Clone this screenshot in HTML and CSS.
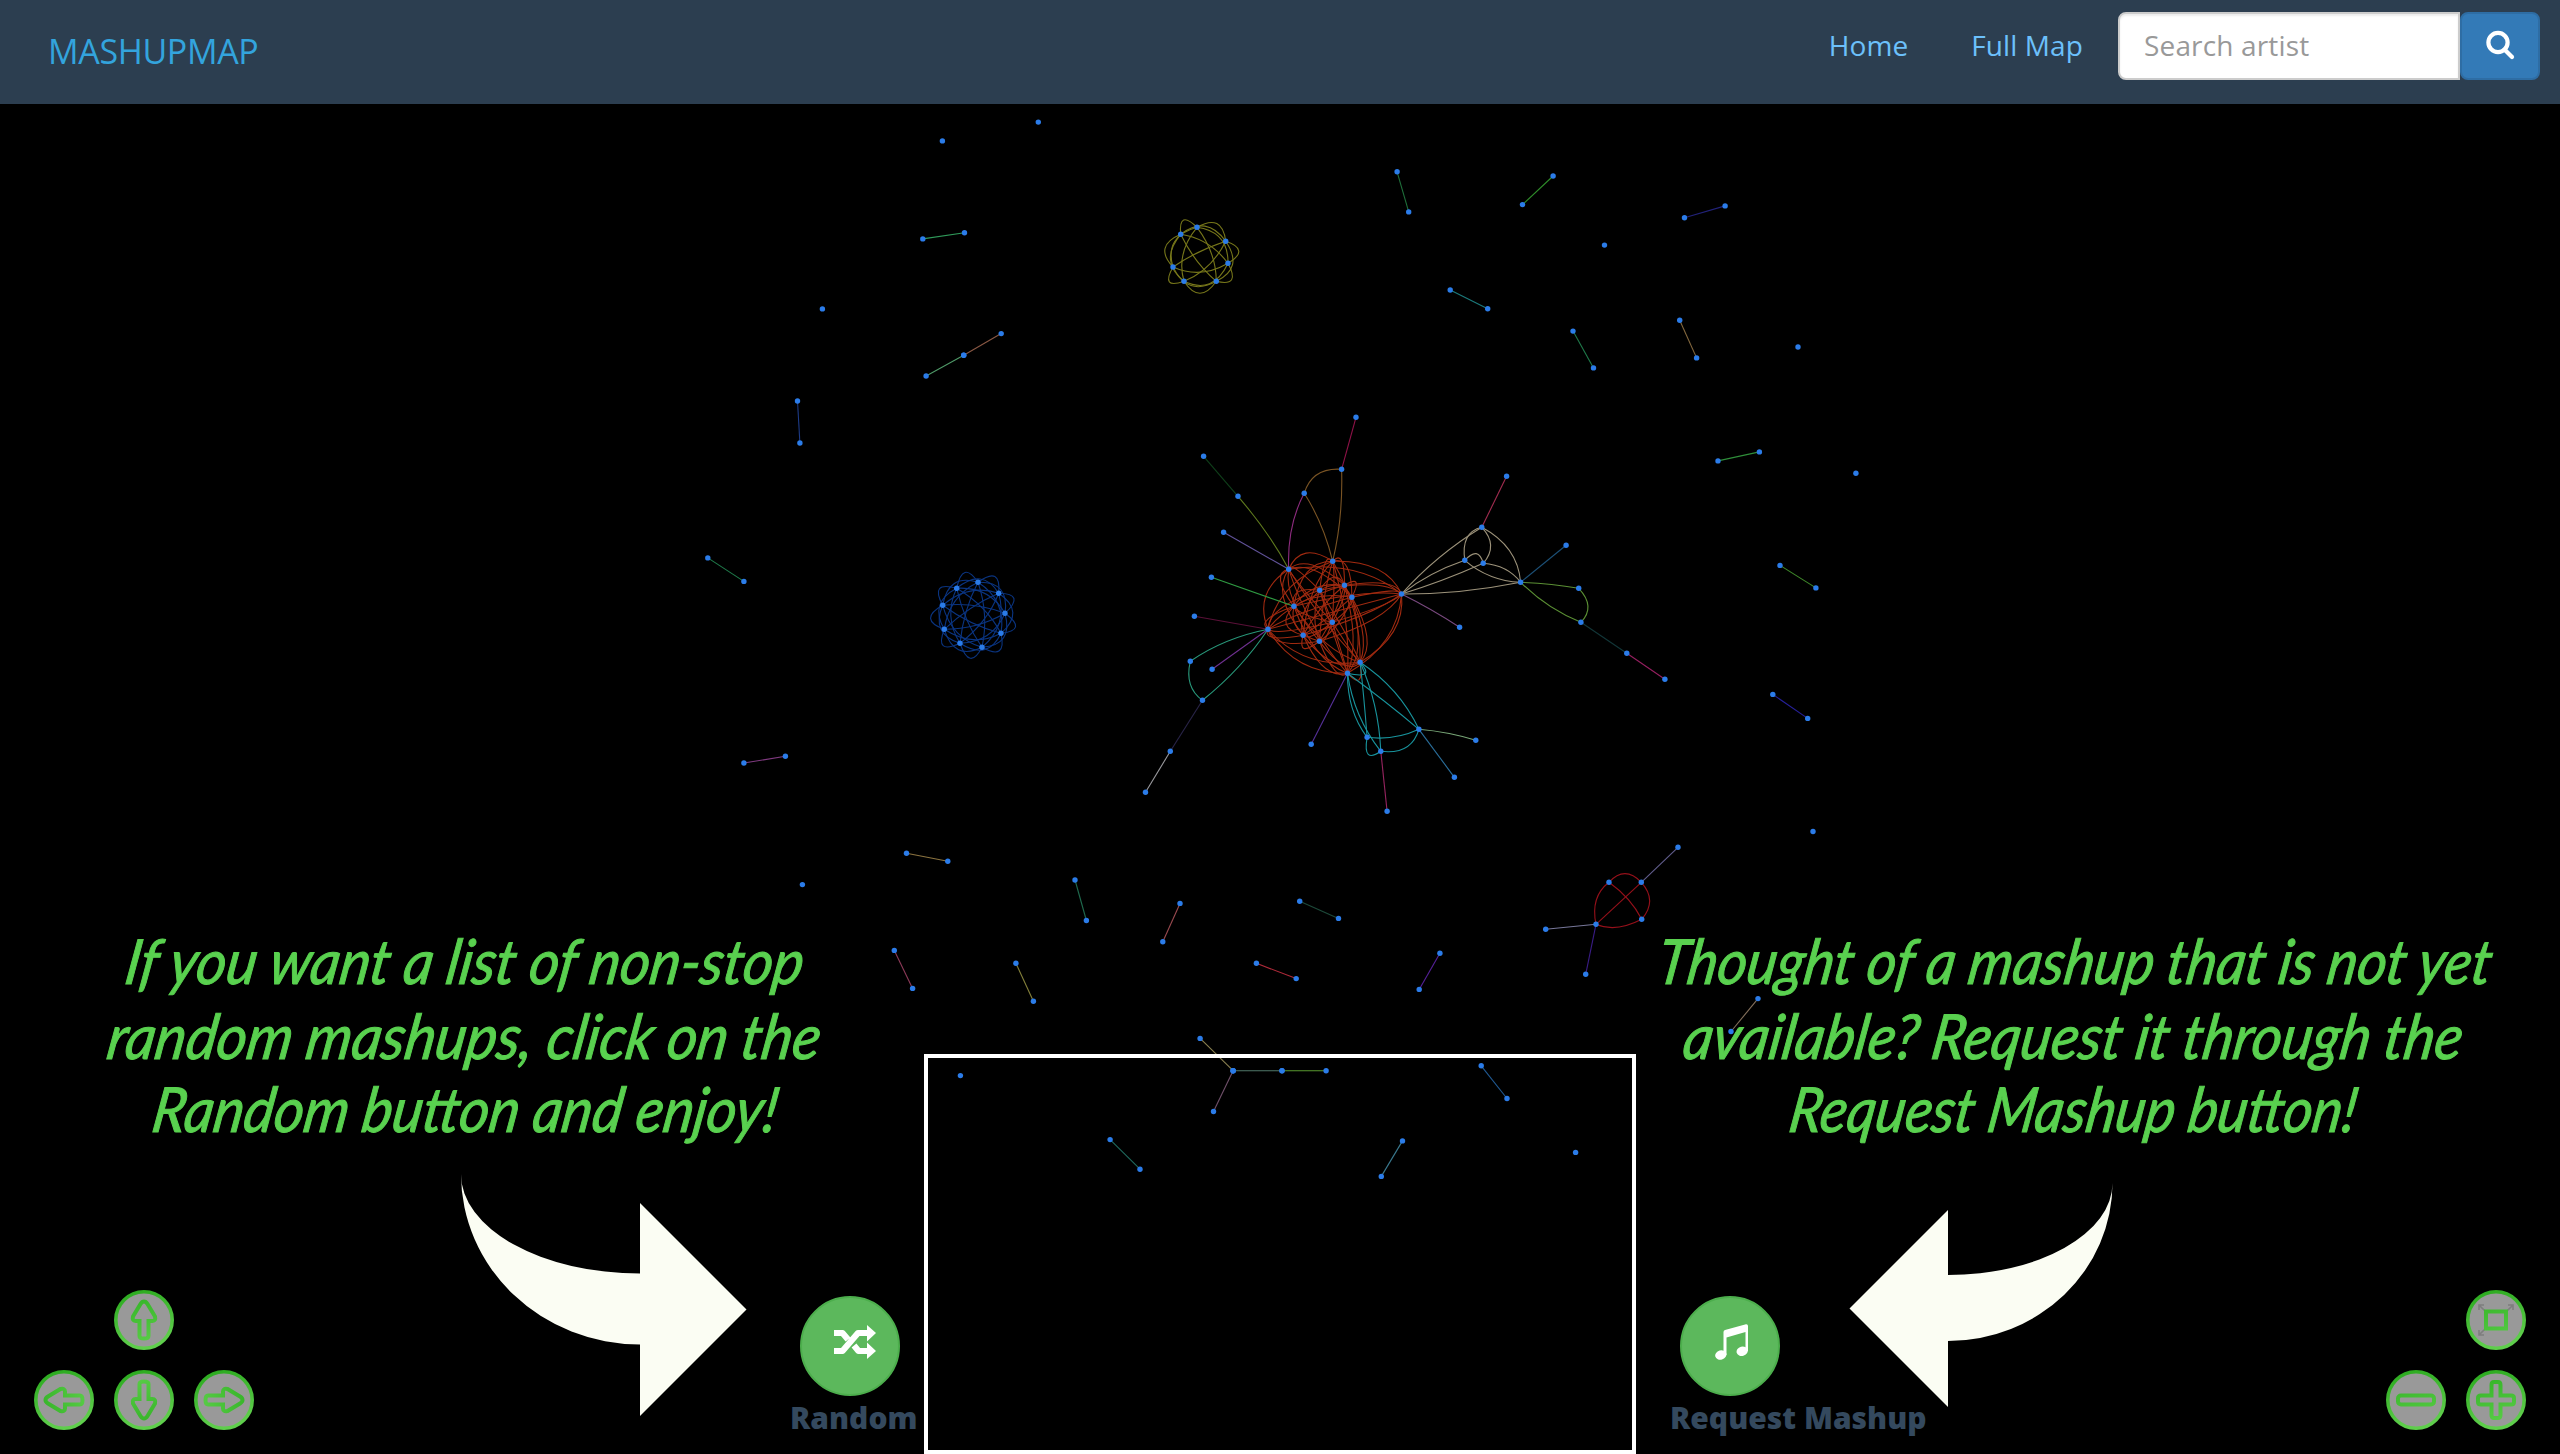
FILE: index.html
```html
<!DOCTYPE html>
<html lang="en">
<head>
<meta charset="utf-8">
<title>MashupMap</title>
<link rel="stylesheet" href="styles.css">
</head>
<body>
<header class="navbar">
  <a class="brand">MASHUPMAP</a>
  <nav class="menu">
    <a class="menu-link">Home</a>
    <a class="menu-link">Full Map</a>
    <form class="search">
      <input class="search-input" type="text" placeholder="Search artist">
      <button class="search-button" type="button" aria-label="Search">
        <svg class="search-icon" viewBox="0 0 30 30"><circle cx="12" cy="12.5" r="9.6"/><path d="M18.5 19.5L26 27"/></svg>
      </button>
    </form>
  </nav>
</header>

<main class="stage">
  <svg class="graph" id="graph" viewBox="0 104 2560 1350"></svg>

  <div class="video"></div>

  <svg class="hint hint-left" viewBox="90 910 760 270">
    <text x="125" y="984" textLength="678" lengthAdjust="spacingAndGlyphs">If you want a list of non-stop</text>
    <text x="107" y="1059" textLength="713" lengthAdjust="spacingAndGlyphs">random mashups, click on the</text>
    <text x="152" y="1132" textLength="625" lengthAdjust="spacingAndGlyphs">Random button and enjoy!</text>
  </svg>
  <svg class="hint hint-right" viewBox="1640 910 870 270">
    <text x="1657" y="984" textLength="834" lengthAdjust="spacingAndGlyphs">Thought of a mashup that is not yet</text>
    <text x="1683" y="1059" textLength="779" lengthAdjust="spacingAndGlyphs">available? Request it through the</text>
    <text x="1789" y="1132" textLength="567" lengthAdjust="spacingAndGlyphs">Request Mashup button!</text>
  </svg>

  <svg class="arrow arrow-left" viewBox="460 1174 288 243"><path d="M461 1174A179 99.5 0 0 0 640 1273.5V1203L746.5 1309.5L640 1416V1344.5A179 170.5 0 0 1 461 1174Z"/></svg>
  <svg class="arrow arrow-right" viewBox="1848 1182 266 226"><path d="M2112.5 1183A164.5 92 0 0 1 1948 1275V1210L1849.5 1308.5L1948 1407V1341A164.5 158 0 0 0 2112.5 1183Z"/></svg>

  <div class="action action-random">
    <button class="round-button" type="button" aria-label="Random">
      <svg class="icon-random" viewBox="0 0 42 34"><path class="band" d="M0 26H8.500L24 8H34M0 8H8.500L14 14.500M20 20.500L24.500 26H34"/><path d="M33 0L42 8L33 16.500ZM33 17.500L42 26L33 34Z"/></svg>
    </button>
    <span class="action-label">Random</span>
  </div>
  <div class="action action-request">
    <button class="round-button" type="button" aria-label="Request Mashup">
      <svg class="icon-music" viewBox="0 0 33 36"><path d="M8.500 8Q8.500 6.500 10 6L31 .2Q33 0 33 2V27H30.500V8L11.500 13.500V31H8.500Z"/><ellipse cx="5.800" cy="31" rx="5.700" ry="4.600" transform="rotate(-15 5.800 31)"/><ellipse cx="27.200" cy="27.200" rx="5.700" ry="4.600" transform="rotate(-15 27.200 27.200)"/></svg>
    </button>
    <span class="action-label">Request Mashup</span>
  </div>

  <svg class="defs" width="0" height="0">
    <defs>
      <linearGradient id="rim" x1="0" y1="0" x2="0.3" y2="1"><stop offset="0" stop-color="#28a81c"/><stop offset="1" stop-color="#5fce4c"/></linearGradient>
      <linearGradient id="mark" gradientUnits="userSpaceOnUse" x1="20" y1="8" x2="34" y2="52"><stop offset="0" stop-color="#35b428"/><stop offset="1" stop-color="#58cc46"/></linearGradient>
      <symbol id="disc" viewBox="0 0 60 60"><circle cx="30" cy="30" r="28.200" fill="#999" stroke="url(#rim)" stroke-width="3.600"/></symbol>
      <path id="pointer" d="M30 11.500Q32 11.500 33.500 14L41 26.500Q42 31 38.500 31H34.500V46Q34.500 48.500 30 48.500T25.500 46V31H21.500Q18 31 19 26.500L26.500 14Q28 11.500 30 11.500Z"/>
    </defs>
  </svg>
  <div class="pan">
    <svg class="control pan-up" viewBox="0 0 60 60"><use href="#disc"/><use href="#pointer" class="mark"/></svg>
    <svg class="control pan-left" viewBox="0 0 60 60"><use href="#disc"/><use href="#pointer" class="mark" transform="rotate(-90 30 30)"/></svg>
    <svg class="control pan-down" viewBox="0 0 60 60"><use href="#disc"/><use href="#pointer" class="mark" transform="rotate(180 30 30)"/></svg>
    <svg class="control pan-right" viewBox="0 0 60 60"><use href="#disc"/><use href="#pointer" class="mark" transform="rotate(90 30 30)"/></svg>
  </div>
  <div class="zoom">
    <svg class="control zoom-fit" viewBox="0 0 60 60"><use href="#disc"/><path class="ticks" d="M19 21L13 15M13 20V15H18M41 21L47 15M42 15H47V20M19 39L13 45M13 40V45H18"/><rect class="mark" x="20" y="21.500" width="20" height="17"/></svg>
    <svg class="control zoom-out" viewBox="0 0 60 60"><use href="#disc"/><rect class="mark" x="12" y="25.500" width="36" height="9" rx="3"/></svg>
    <svg class="control zoom-in" viewBox="0 0 60 60"><use href="#disc"/><path class="mark" d="M25.500 15Q25.500 12 28 12H32Q34.500 12 34.500 15V25.500H45Q48 25.500 48 28V32Q48 34.500 45 34.500H34.500V45Q34.500 48 32 48H28Q25.500 48 25.500 45V34.500H15Q12 34.500 12 32V28Q12 25.500 15 25.500H25.500Z"/></svg>
  </div>
</main>
<script src="graph.js"></script>
</body>
</html>
```

FILE: styles.css
```css
* { box-sizing: border-box; }
body {
  margin: 0;
  height: 1454px;
  display: flex;
  flex-direction: column;
  overflow: hidden;
  background: #000;
  font-family: "Open Sans", "Noto Sans", sans-serif;
}
.navbar {
  flex: 0 0 104px;
  display: flex;
  justify-content: space-between;
  align-items: flex-start;
  padding: 12px 20px 0 48px;
  background: #2c3e50;
}
.brand {
  color: #33a4dd;
  font-size: 34px;
  line-height: 46px;
  padding-top: 16px;
  letter-spacing: -.35px;
}
.menu { display: flex; align-items: center; }
.menu-link {
  color: #6cc0fb;
  font-size: 28px;
  line-height: 66px;
  margin: 0 63px 2px 0;
  letter-spacing: .1px;
}
.menu-link + .menu-link { margin-right: 35px; }
.search { display: flex; height: 68px; }
.search-input {
  width: 342px;
  padding: 0 24px 2px;
  border: 2px solid #ccc;
  border-radius: 8px 0 0 8px;
  box-shadow: inset 0 2px 2px rgba(0, 0, 0, .075);
  background: #fff;
  font: 28px "Open Sans", sans-serif;
  letter-spacing: .15px;
}
.search-input::placeholder { color: #999; opacity: 1; }
.search-button {
  width: 80px;
  padding: 0;
  display: flex;
  align-items: center;
  justify-content: center;
  border: 2px solid #2e6da4;
  border-radius: 8px;
  background: #337ab7;
}
.search-icon { width: 30px; height: 30px; margin: -3px 0 0 2px; fill: none; stroke: #fff; stroke-width: 4.2; stroke-linecap: round; }

.stage { position: relative; flex: 1; }
.graph { display: block; width: 2560px; height: 1350px; }
.graph path { fill: none; stroke-width: 1.1; }
.graph circle { fill: #2b7ce9; }

.video { position: absolute; left: 924px; top: 950px; width: 712px; height: 400px; border: 4px solid #fff; }

.hint {
  position: absolute;
  top: 806px;
  height: 270px;
  overflow: visible;
  fill: #59d14f;
  stroke: #59d14f;
  stroke-width: 1;
  font: italic 400 62px Lato, sans-serif;
}
.hint text { transform-box: fill-box; transform-origin: center 65%; transform: skewX(-9deg); }
.hint-left { left: 90px; width: 760px; }
.hint-right { left: 1640px; width: 870px; }

.arrow { position: absolute; fill: #fbfdf3; }
.arrow-left { left: 460px; top: 1070px; width: 288px; height: 243px; }
.arrow-right { left: 1848px; top: 1078px; width: 266px; height: 226px; }

.action { position: absolute; top: 1192px; display: flex; flex-direction: column; align-items: flex-start; }
.action-random { left: 790px; }
.action-request { left: 1670px; }
.round-button {
  width: 100px;
  height: 100px;
  margin-left: 10px;
  padding: 0;
  display: flex;
  align-items: center;
  justify-content: center;
  border: 2px solid #4cae4c;
  border-radius: 50%;
  background: #5cb85c;
}
.icon-random { width: 42px; height: 34px; margin: -8px 0 0 10px; fill: #fff; }
.band { fill: none; stroke: #fff; stroke-width: 6.2; stroke-linejoin: round; }
.icon-music { width: 33px; height: 36px; margin: -8px 0 0 3px; fill: #fff; }
.action-label { color: #34495e; font-size: 30px; font-weight: 800; line-height: 40px; margin-top: 2px; white-space: nowrap; }

.defs { position: absolute; }
.pan, .zoom { position: absolute; top: 1186px; display: grid; gap: 20px; }
.pan { left: 34px; grid-template-columns: repeat(3, 60px); }
.zoom { left: 2386px; grid-template-columns: repeat(2, 60px); }
.control { display: block; width: 60px; height: 60px; }
.pan-up { grid-area: 1 / 2; }
.pan-left { grid-area: 2 / 1; }
.pan-down { grid-area: 2 / 2; }
.pan-right { grid-area: 2 / 3; }
.zoom-fit { grid-column: 2; }
.mark { fill: none; stroke: url(#mark); stroke-width: 4; }
.ticks { fill: none; stroke: #7e7e7e; stroke-width: 1.6; }
```

FILE: graph.js
```js
const NS = 'http://www.w3.org/2000/svg';
const svg = document.getElementById('graph');
const edgeLayer = svg.appendChild(document.createElementNS(NS, 'g'));
const nodeLayer = svg.appendChild(document.createElementNS(NS, 'g'));

function node([x, y]) {
  const c = document.createElementNS(NS, 'circle');
  c.setAttribute('cx', x.toFixed(1));
  c.setAttribute('cy', y.toFixed(1));
  c.setAttribute('r', 2.7);
  nodeLayer.appendChild(c);
}
// An edge is a quadratic curve that passes through `via` halfway along.
function edge(a, b, color, via) {
  const m = via || [(a[0] + b[0]) / 2, (a[1] + b[1]) / 2];
  const c = [2 * m[0] - (a[0] + b[0]) / 2, 2 * m[1] - (a[1] + b[1]) / 2];
  const p = document.createElementNS(NS, 'path');
  p.setAttribute('d', `M${a.map(v => v.toFixed(1))}Q${c.map(v => v.toFixed(1))} ${b.map(v => v.toFixed(1))}`);
  p.setAttribute('stroke', color);
  edgeLayer.appendChild(p);
}
// Every pair of nodes is joined; edge middles are pushed away from the centre.
function clique(points, center, push, soft, color) {
  for (let i = 0; i < points.length; i++) {
    for (let j = i + 1; j < points.length; j++) {
      const a = points[i], b = points[j];
      const m = [(a[0] + b[0]) / 2, (a[1] + b[1]) / 2];
      const dx = m[0] - center[0], dy = m[1] - center[1];
      const r = Math.hypot(dx, dy) || 1;
      const k = push * Math.min(1, r / soft + 0.1) / r;
      edge(a, b, color, [m[0] + dx * k, m[1] + dy * k]);
    }
  }
}
const frame = (ox, oy, sx, sy) => ([x, y]) => [ox + x / sx, oy + y / sy];

// Yellow and blue rings
let f = frame(1130, 200, 3, 3);
let ring = [[201,82],[287,124],[294,190],[259,244],[162,244],[129,201],[152,103]].map(f);
clique(ring, f([212,166]), 12, 20, '#77771a');
ring.forEach(node);
f = frame(910, 550, 3, 3);
ring = [[204,97],[266,130],[285,190],[273,250],[216,292],[150,280],[103,238],[98,166],[140,115]].map(f);
clique(ring, f([188,195]), 13, 30, '#0a3480');
ring.forEach(node);

// Main cluster
f = frame(1120, 380, 2.7034, 3);
const core = [[456,568],[575,544],[607,616],[540,631],[627,652],[470,679],[400,748],[574,727],[495,766],[539,784],[761,642],[649,847],[615,880]];
clique(core.map(f), f([565,700]), 13, 36, '#a02a10');
const links = [
  ['#0f3f1a',[226,229],[319,349]],['#5f7a1e',[319,349],[456,568],[398,462]],['#61539a',[280,457],[456,568]],
  ['#8f2c80',[498,340],[456,568],[464,446]],['#7a5424',[498,340],[575,544],[543,435]],['#7a5424',[599,268],[575,544],[595,410]],
  ['#7a5424',[498,340],[599,268],[534,283]],['#8f1248',[638,112],[599,268]],['#2f9a42',[247,592],[470,679]],
  ['#5a1038',[201,709],[400,748]],['#28987a',[400,748],[190,844],[288,785]],['#28987a',[190,844],[223,961],[190,912]],
  ['#28987a',[400,748],[223,961],[320,861]],['#6f3090',[400,748],[249,868]],['#292448',[223,961],[136,1114]],
  ['#9a9a9e',[136,1114],[69,1237]],['#56309a',[615,880],[517,1093]],
  ['#18939c',[615,880],[668,1072],[628,985]],['#18939c',[615,880],[705,1114],[646,1004]],['#18939c',[615,880],[808,1048],[716,965]],
  ['#18939c',[649,847],[668,1072],[659,955]],['#18939c',[649,847],[705,1114],[688,975]],['#18939c',[649,847],[808,1048],[742,936]],
  ['#18939c',[668,1072],[808,1048],[740,1071]],['#18939c',[705,1114],[808,1048],[772,1103]],['#18939c',[668,1072],[705,1114],[671,1123]],
  ['#18939c',[615,880],[649,847],[662,881]],['#79a878',[808,1048],[962,1081],[886,1060]],['#2a6f9c',[808,1048],[904,1192]],
  ['#982460',[705,1114],[722,1294]],['#79497f',[761,642],[918,742],[842,690]],
  ['#9c927a',[761,642],[978,442],[862,534]],['#9c927a',[761,642],[932,541],[840,585]],['#9c927a',[761,642],[982,550],[870,601]],
  ['#9c927a',[761,642],[1083,607],[920,634]],['#9c927a',[978,442],[932,541],[938,474]],['#9c927a',[978,442],[982,550],[1002,496]],
  ['#9c927a',[978,442],[1083,607],[1053,512]],['#9c927a',[932,541],[982,550],[963,521]],['#9c927a',[932,541],[1083,607],[1002,588]],
  ['#9c927a',[982,550],[1083,607],[1040,567]],['#a12c50',[978,442],[1045,289]],['#1c5178',[1083,607],[1206,496]],
  ['#5b9034',[1083,607],[1240,625],[1162,613]],['#5b9034',[1083,607],[1246,727],[1160,677]],['#5b9034',[1240,625],[1246,727],[1265,678]],
  ['#123638',[1246,727],[1370,820]],['#961f60',[1370,820],[1473,898]]
];
links.forEach(([color, a, b, via]) => edge(f(a), f(b), color, via && f(via)));
core.concat([[226,229],[319,349],[280,457],[498,340],[599,268],[638,112],[247,592],[201,709],[190,844],[249,868],[223,961],
  [136,1114],[69,1237],[517,1093],[668,1072],[705,1114],[808,1048],[962,1081],[904,1192],[722,1294],[918,742],[978,442],
  [932,541],[982,550],[1083,607],[1045,289],[1206,496],[1240,625],[1246,727],[1370,820],[1473,898]]).map(f).forEach(node);

// Small red cluster
f = frame(1520, 830, 3, 3);
[['#96101a',[267,157],[364,157],[315,131]],['#96101a',[364,157],[365,268],[389,212]],['#96101a',[228,283],[365,268],[292,292]],
 ['#96101a',[267,157],[228,283],[229,210]],['#96101a',[364,157],[228,283],[297,219]],['#96101a',[267,157],[365,268],[324,208]],
 ['#625e8e',[364,157],[474,52]],['#77779a',[77,298],[228,283]],['#3a1c86',[228,283],[197,433]]
].forEach(([color, a, b, via]) => edge(f(a), f(b), color, via && f(via)));
[[267,157],[364,157],[365,268],[228,283],[474,52],[77,298],[197,433]].map(f).forEach(node);

// Scattered pairs and single artists
f = frame(0.4, -0.3, 0.6125, 0.6125);
[['#2f9a5a',[565,146.500],[590.500,142.700]],['#4f9a68',[567,230.500],[590,217.800]],['#8a5844',[590,217.800],[613,204.500]],
 ['#1c3a86',[488.200,245.800],[489.700,271.500]],['#1f7a4a',[433.300,341.900],[455.400,356.300]],['#803a80',[455.400,467.500],[480.800,463.400]],
 ['#1f6f3a',[855.500,105.400],[862.600,130]],['#2f8f2a',[932.300,125.500],[951,108]],['#22227a',[1031.500,133.500],[1056.400,126.300]],
 ['#1c7a7c',[888,177.800],[911,189.300]],['#1f7a4a',[963.200,203],[975.800,225.500]],['#84683e',[1028.600,196.300],[1038.900,219.400]],
 ['#2f8f3a',[1052,282.500],[1077.400,277]],['#3f8a2a',[1090,346.500],[1112,360.300]],['#26209a',[1085.600,425.500],[1107,440.200]],
 ['#8c7440',[555,522.800],[580.300,527.700]],['#1f6a4e',[658.200,539.200],[665.200,564]],['#9a4a50',[722.500,553.500],[712,577]],
 ['#1d4a3a',[795.800,552.200],[819.600,562.700]],['#b02a3a',[769.300,590.200],[793.700,599.600]],['#56209a',[881.700,584],[869,606.200]],
 ['#8c3a58',[547.500,582.300],[558.700,605.600]],['#84803a',[622,590.200],[632.700,613.500]],['#84705c',[1076.500,611.800],[1060,632]],
 ['#8a8050',[734.800,636.200],[755,656]],['#50786a',[755,656],[785,656]],['#5a9a30',[785,656],[812,656]],['#70506a',[755,656],[743,681]],
 ['#205a94',[907,653],[922.800,673]],['#1f6a5e',[679.700,698.200],[698,716.300]],['#3a7a90',[858.800,699],[845.800,720.700]]
].forEach(([color, a, b]) => { edge(f(a), f(b), color); node(f(a)); node(f(b)); });
[[577,86.500],[635.700,75],[503.500,189.400],[982.500,150.300],[1101,212.700],[1136.500,290],[491.200,542],[1110.200,509.500],[588,659],[964.800,706]]
  .map(f).forEach(node);
```
